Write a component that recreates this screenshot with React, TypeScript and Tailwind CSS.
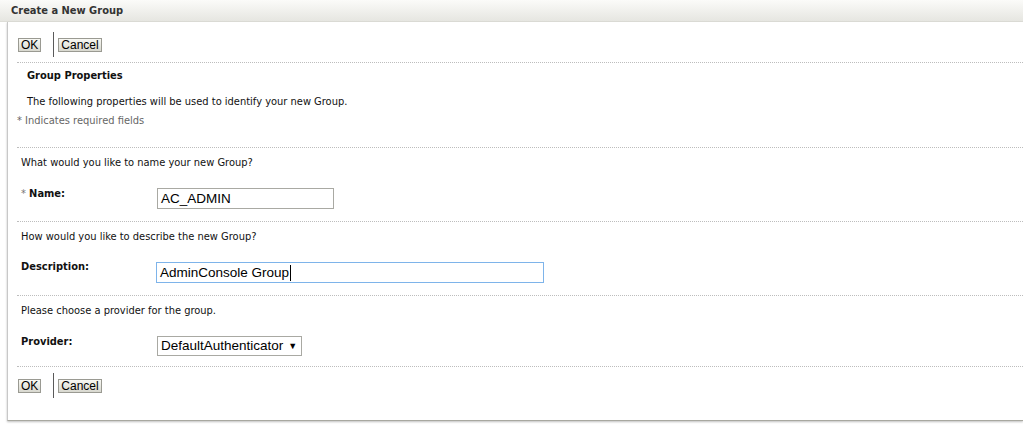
import React from "react"

const tahoma = { fontFamily: '"DejaVu Sans Condensed", "Liberation Sans", sans-serif' }
const arial = { fontFamily: '"Liberation Sans", Arial, sans-serif' }

function Btn({ label }: { label: string }) {
  return (
    <button
      style={arial}
      className="h-[14px] px-[2px] border border-[#9a9a92] bg-gradient-to-b from-[#f8f8f3] to-[#d8d8cf] text-[12px] leading-[12px] text-black"
    >
      {label}
    </button>
  )
}

function ButtonBar() {
  return (
    <div className="flex items-center h-[25px] pl-[10px]">
      <Btn label="OK" />
      <div className="w-px h-[25px] bg-[#5a5a5a] ml-[12px] mr-[4px]" />
      <Btn label="Cancel" />
    </div>
  )
}

function Dots() {
  return <div className="ml-[9px] border-t border-dotted border-[#bdbdbd]" />
}

export default function App() {
  return (
    <div style={tahoma} className="w-[1023px] h-[427px] bg-white text-[11px] leading-[14px] text-[#111]">
      {/* header */}
      <div className="h-[22px] bg-gradient-to-b from-[#fbfbf9] to-[#e6e6e1] border-b border-[#deded8] pl-[11px]">
        <span className="text-[11px] leading-[21px] font-bold text-[#333]">Create a New Group</span>
      </div>

      {/* panel */}
      <div className="ml-[7px] h-[399px] border-l border-b border-l-[#c8c8c8] border-b-[#a8a8a0] shadow-[0_1px_2px_rgba(0,0,0,0.25)]">
        <div className="pt-[10px]">
          <ButtonBar />
        </div>
        <div className="mt-[5px]">
          <Dots />
        </div>

        {/* group properties */}
        <div className="pt-[6px] pl-[9px]">
          <div className="pl-[10px] font-bold">Group Properties</div>
          <div className="pl-[10px] mt-[12px]">The following properties will be used to identify your new Group.</div>
          <div className="mt-[5px] text-[#666]">* Indicates required fields</div>
        </div>
        <div className="mt-[19px]">
          <Dots />
        </div>

        {/* name */}
        <div className="pt-[8px] pl-[13px]">
          <div>What would you like to name your new Group?</div>
          <div className="flex mt-[18px]">
            <div className="w-[136px] -mt-[1px] font-bold">
              <span className="font-normal text-[#777]">* </span>Name:
            </div>
            <div
              style={arial}
              className="w-[177px] h-[21px] border border-[#a9a9a3] pl-[3px] text-[13.5px] leading-[19px] text-black"
            >
              AC_ADMIN
            </div>
          </div>
        </div>
        <div className="mt-[12px]">
          <Dots />
        </div>

        {/* description */}
        <div className="pt-[8px] pl-[13px]">
          <div>How would you like to describe the new Group?</div>
          <div className="flex mt-[18px]">
            <div className="w-[135px] -mt-[2px] font-bold">Description:</div>
            <div
              style={arial}
              className="w-[388px] h-[21px] border border-[#7eb4ea] pl-[3px] text-[13.5px] leading-[19px] text-black flex items-center"
            >
              AdminConsole Group
              <span className="inline-block w-px h-[16px] bg-black ml-px" />
            </div>
          </div>
        </div>
        <div className="mt-[12px]">
          <Dots />
        </div>

        {/* provider */}
        <div className="pt-[8px] pl-[13px]">
          <div>Please choose a provider for the group.</div>
          <div className="flex mt-[18px]">
            <div className="w-[136px] -mt-[1px] font-bold">Provider:</div>
            <div
              style={arial}
              className="w-[145px] h-[20px] border border-[#a9a9a3] pl-[3px] text-[13.5px] leading-[18px] text-black flex items-center"
            >
              DefaultAuthenticator
              <span className="ml-[5px] text-[9px] leading-[18px]">▼</span>
            </div>
          </div>
        </div>
        <div className="mt-[10px]">
          <Dots />
        </div>

        <div className="pt-[6px]">
          <ButtonBar />
        </div>
      </div>
    </div>
  )
}
